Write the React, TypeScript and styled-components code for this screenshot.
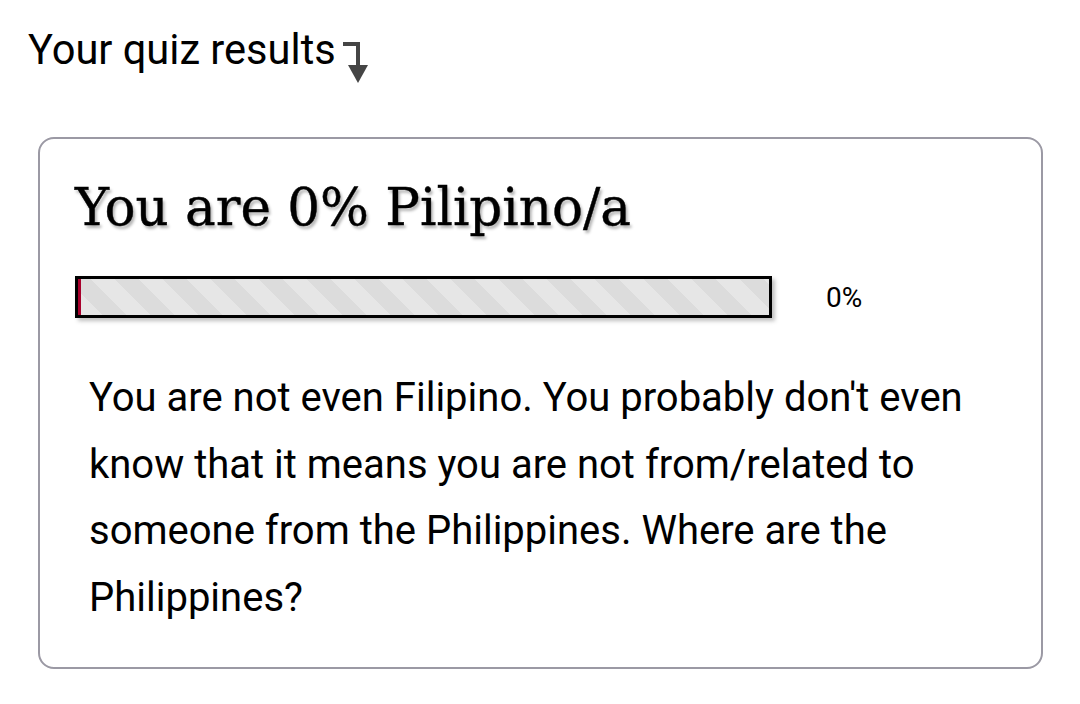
import React from "react";
import styled, { createGlobalStyle } from "styled-components";

const GlobalStyle = createGlobalStyle`
  html, body {
    margin: 0;
    padding: 0;
    background: #ffffff;
  }
  body {
    font-family: Roboto, "Liberation Sans", sans-serif;
    color: #000;
  }
`;

const result = {
  percent: 0,
  title: "You are 0% Pilipino/a",
  text: "You are not even Filipino. You probably don't even know that it means you are not from/related to someone from the Philippines. Where are the Philippines?",
};

const App = () => {
  return (
    <>
      <GlobalStyle />
      <Page>
        <Heading>
          Your quiz results
          <ArrowIcon width="28" height="42" viewBox="0 0 28 42">
            <path d="M0 2 H15 V26" fill="none" stroke="#454545" strokeWidth="4" />
            <polygon points="5,23 25,23 15,41" fill="#454545" />
          </ArrowIcon>
        </Heading>
        <Card>
          <Title>{result.title}</Title>
          <BarRow>
            <Bar>
              <Fill style={{ width: `${result.percent}%` }} />
            </Bar>
            <Percent>{result.percent}%</Percent>
          </BarRow>
          <Description>{result.text}</Description>
        </Card>
      </Page>
    </>
  );
};

export default App;

const Page = styled.div`
  width: 1080px;
  height: 704px;
  box-sizing: border-box;
  padding: 25px 37px 0 38px;
`;

const Heading = styled.div`
  display: flex;
  align-items: flex-start;
  margin-left: -10px;
  font-size: 41.6px;
  line-height: 50px;
  height: 112px;
`;

const ArrowIcon = styled.svg`
  margin-left: 7px;
  margin-top: 17px;
`;

const Card = styled.div`
  border: 2px solid #9b99a4;
  border-radius: 16px;
  padding: 33px 34px 36px 35px;
`;

const Title = styled.h1`
  margin: 0;
  font-family: "DejaVu Serif", serif;
  font-weight: normal;
  font-size: 51.5px;
  line-height: 70px;
  color: #000;
  -webkit-text-stroke: 0.4px #000;
  text-shadow: 2px 3px 3px rgba(0, 0, 0, 0.3);
`;

const BarRow = styled.div`
  display: flex;
  align-items: center;
  margin-top: 34px;
  gap: 54px;
`;

const Bar = styled.div`
  display: flex;
  width: 691px;
  height: 36px;
  border: 3px solid #000;
  box-shadow: 3px 3px 4px rgba(0, 0, 0, 0.25);
  background: repeating-linear-gradient(
    45deg,
    #e6e6e6 0px,
    #e6e6e6 17px,
    #dcdcdc 17px,
    #dcdcdc 34px
  );
`;

const Fill = styled.div`
  min-width: 3px;
  height: 100%;
  background: #a8002c;
`;

const Percent = styled.span`
  font-size: 28px;
`;

const Description = styled.p`
  margin: 47px 0 0 14px;
  font-size: 40px;
  line-height: 66.5px;
`;
